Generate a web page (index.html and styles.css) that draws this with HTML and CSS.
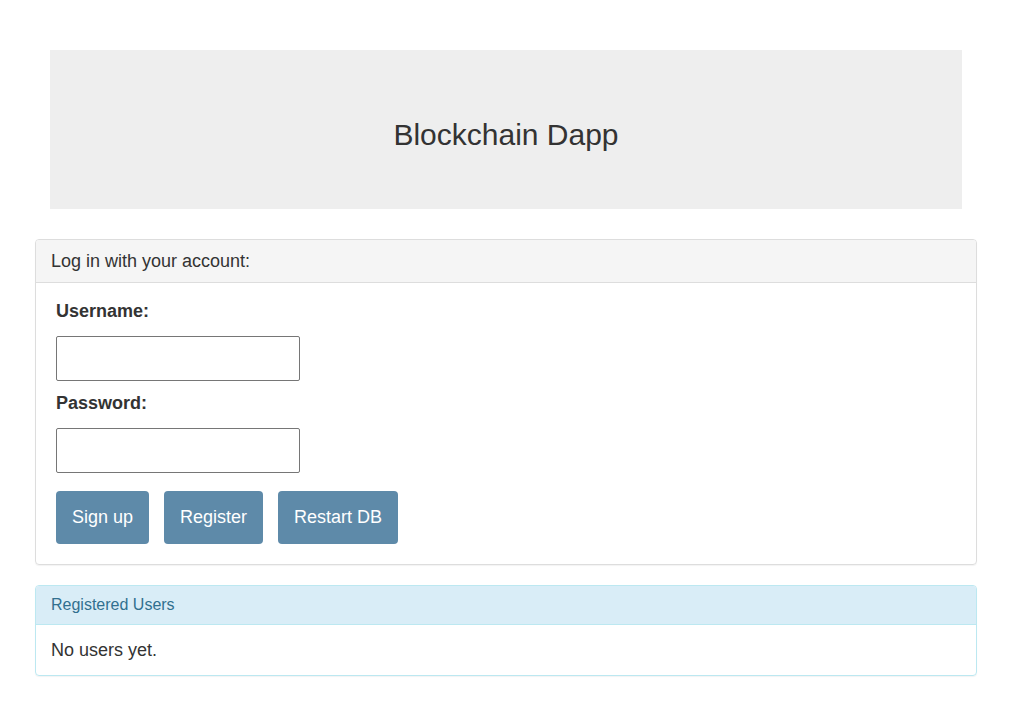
FILE: index.html
```html
<!DOCTYPE html>
<html>
<head>
<meta charset="utf-8">
<link rel="stylesheet" href="styles.css">
</head>
<body>
<div class="page">
  <div class="jumbotron">
    <h1 class="title">Blockchain Dapp</h1>
  </div>
  <div class="panel">
    <div class="panel-heading">Log in with your account:</div>
    <div class="panel-body">
      <form class="login">
        <label class="label" for="u">Username:</label>
        <input class="input" id="u" type="text">
        <label class="label" for="p">Password:</label>
        <input class="input" id="p" type="password">
        <div class="buttons">
          <button type="button" class="btn">Sign up</button>
          <button type="button" class="btn">Register</button>
          <button type="button" class="btn">Restart DB</button>
        </div>
      </form>
    </div>
  </div>
  <div class="panel panel-info">
    <div class="panel-heading">Registered Users</div>
    <div class="panel-body info-body">No users yet.</div>
  </div>
</div>
</body>
</html>
```

FILE: styles.css
```css
* { box-sizing: border-box; }
html, body { margin: 0; padding: 0; background: #fff; }
body {
  font-family: "Liberation Sans", Arial, sans-serif;
  font-size: 18px;
  line-height: 22px;
  color: #333;
}
.page {
  padding: 50px 35px 20px;
}
.jumbotron {
  margin: 0 15px 30px;
  height: 159px;
  background: #eee;
  display: flex;
  align-items: center;
  justify-content: center;
}
.title {
  margin: 0;
  font-size: 30px;
  font-weight: normal;
  line-height: 33px;
  color: #333;
  padding-top: 10px;
}
.panel {
  border: 1px solid #ddd;
  border-radius: 4px;
  margin-bottom: 20px;
  box-shadow: 0 1px 1px rgba(0,0,0,0.05);
}
.panel-heading {
  background: #f5f5f5;
  border-bottom: 1px solid #ddd;
  padding: 10px 15px;
  border-radius: 3px 3px 0 0;
}
.panel-body {
  padding: 17px 20px 20px;
}
.login {
  display: flex;
  flex-direction: column;
  align-items: flex-start;
}
.label {
  font-weight: bold;
  margin-bottom: 14px;
}
.input {
  width: 244px;
  height: 45px;
  border: 1px solid #767676;
  border-radius: 2px;
  margin: 0 0 11px;
  font: inherit;
  padding: 4px 8px;
}
.buttons {
  display: flex;
  gap: 15px;
  margin-top: 7px;
}
.btn {
  background: #5e8aa9;
  color: #fff;
  border: none;
  border-radius: 4px;
  font-family: "Liberation Sans", Arial, sans-serif;
  font-size: 18px;
  line-height: 25px;
  padding: 14px 16px;
  cursor: pointer;
}
.panel-info {
  border-color: #bce8f1;
}
.panel-info .panel-heading {
  background: #d9edf7;
  border-bottom-color: #bce8f1;
  color: #31708f;
  font-size: 16px;
  padding: 8px 15px;
}
.info-body {
  padding: 14px 15px;
}
```
